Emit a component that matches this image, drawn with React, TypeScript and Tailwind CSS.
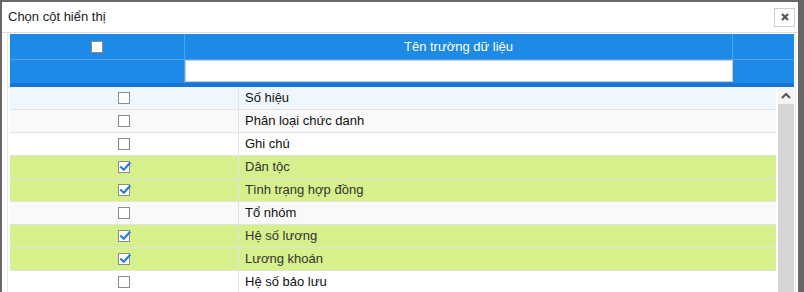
import React from 'react';

type Row = { label: string; checked: boolean };

const rows: Row[] = [
  { label: 'Số hiệu', checked: false },
  { label: 'Phân loại chức danh', checked: false },
  { label: 'Ghi chú', checked: false },
  { label: 'Dân tộc', checked: true },
  { label: 'Tình trạng hợp đồng', checked: true },
  { label: 'Tổ nhóm', checked: false },
  { label: 'Hệ số lương', checked: true },
  { label: 'Lương khoán', checked: true },
  { label: 'Hệ số bảo lưu', checked: false },
];

function Check({ checked }: { checked: boolean }) {
  return (
    <span className="relative block w-[12px] h-[12px] border border-[#8c8c8c] bg-white">
      {checked && (
        <svg className="absolute left-[0px] top-[-1px]" width="12" height="12" viewBox="0 0 12 12">
          <path d="M2 6.2 L4.8 8.8 L10.6 2.4" fill="none" stroke="#2b7fd2" strokeWidth="2.2" strokeLinecap="square" />
        </svg>
      )}
    </span>
  );
}

export default function App() {
  return (
    <div className="h-[292px] overflow-hidden bg-[#676767] pt-[2px] pl-[2px] pr-[6px] font-['Liberation_Sans',Arial,sans-serif]">
      <div className="h-[300px] bg-white flex flex-col">
        {/* title */}
        <div className="h-[31px] flex items-center justify-between pl-[6px] pr-[3px] border-b border-[#dedede]">
          <span className="text-[13px] text-[#222]">Chọn cột hiển thị</span>
          <button className="w-[21px] h-[19px] border border-[#cfcfcf] flex items-center justify-center">
            <svg width="8" height="8" viewBox="0 0 8 8">
              <path d="M1 1 L7 7 M7 1 L1 7" stroke="#555" strokeWidth="2.2" />
            </svg>
          </button>
        </div>

        <div className="flex-1 ml-[5px] mr-[2px] border-l border-r border-[#e6e6e6] pl-[2px] pr-[1px] pt-[1px]">
          {/* header */}
          <div className="bg-[#1d8ae7] text-white">
            <div className="grid grid-cols-[175px_548px_1fr] h-[26px] border-b border-[#4ea4ef]">
              <div className="flex items-center justify-center border-r border-[#4ea4ef]">
                <span className="block w-[12px] h-[12px] border border-[#8c8c8c] bg-white" />
              </div>
              <div className="flex items-center justify-center text-[13px] border-r border-[#4ea4ef]">Tên trường dữ liệu</div>
              <div />
            </div>
            <div className="grid grid-cols-[175px_548px_1fr] h-[23px]">
              <div className="border-r border-[#4ea4ef]" />
              <input className="h-[22px] bg-white border border-[#c8c8c8] outline-none" />
              <div />
            </div>
            <div className="h-[4px] bg-[#1a74d3]" />
          </div>

          {/* body */}
          <div className="flex">
            <div className="w-[766px]">
              {rows.map((r, i) => {
                const bg = i === 0 ? 'bg-[#eef7fd]' : r.checked ? 'bg-[#d6f08c]' : i % 2 === 1 ? 'bg-[#f9f9f9]' : 'bg-white';
                return (
                  <div key={r.label} className={`flex h-[23px] border-b border-[#e2e2e2] ${bg}`}>
                    <div className="w-[229px] flex items-center justify-center border-r border-[#e2e2e2]">
                      <Check checked={r.checked} />
                    </div>
                    <div className={`flex-1 flex items-center pl-[6px] text-[13px] ${r.checked ? 'text-[#333]' : 'text-[#111]'}`}>{r.label}</div>
                  </div>
                );
              })}
            </div>
            <div className="ml-[2px] w-[16px] bg-[#d6d6d6]">
              <div className="h-[17px] bg-[#f4f4f4] flex items-center justify-center">
                <svg width="10" height="7" viewBox="0 0 10 7">
                  <path d="M1 6 L5 2 L9 6" fill="none" stroke="#555" strokeWidth="2" />
                </svg>
              </div>
            </div>
          </div>
        </div>
      </div>
    </div>
  );
}
